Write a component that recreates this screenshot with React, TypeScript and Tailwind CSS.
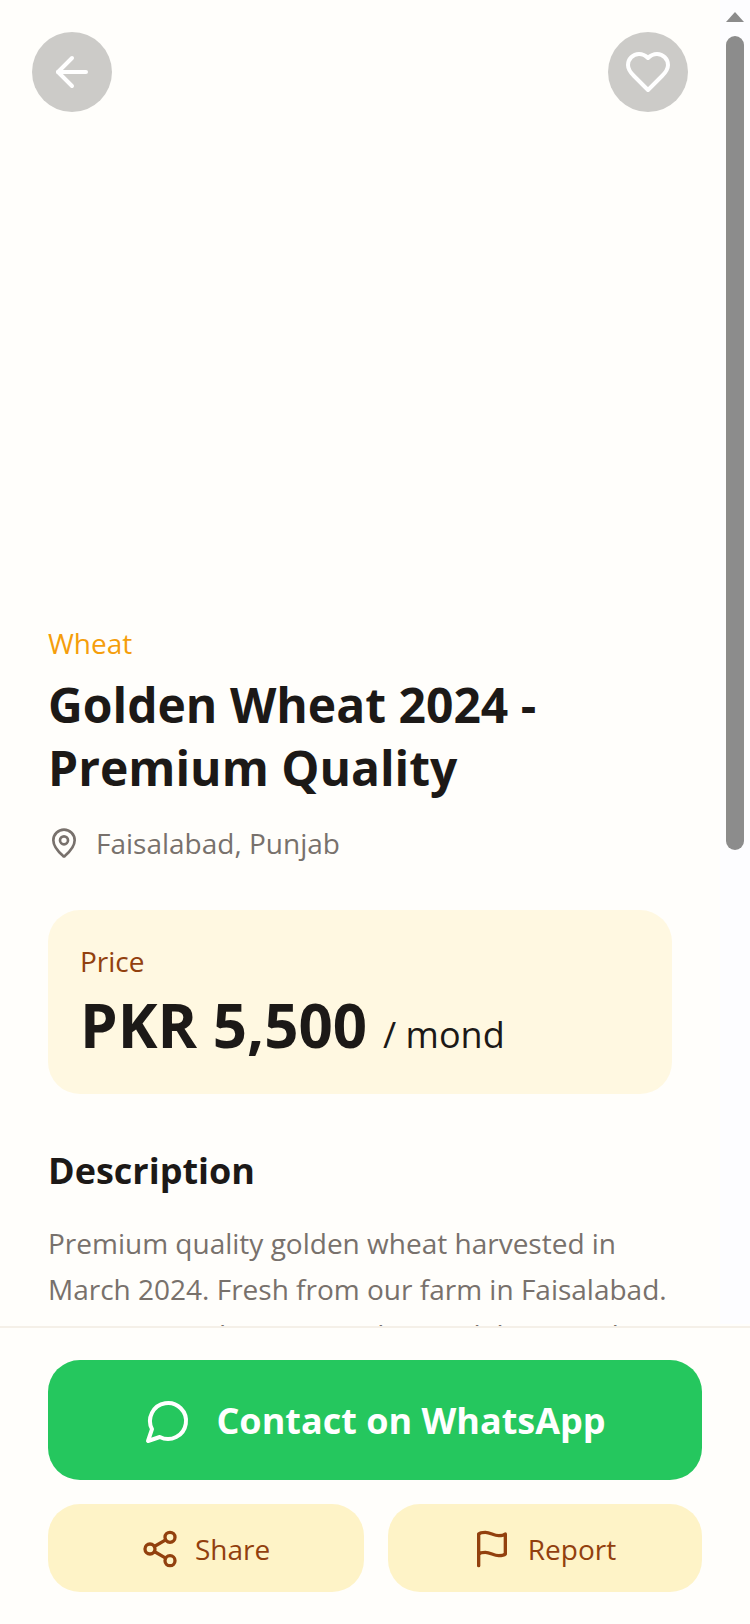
import React from 'react';
import {ArrowLeft, MapPin, Share2} from 'lucide-react';

const App: React.FC = () => {
    return (
        <div className="relative flex flex-col w-[750px] h-[1624px] overflow-hidden bg-[#fffefb] font-['Open_Sans',sans-serif]">
            <div className="flex-1 min-h-0 overflow-hidden">
                <div className="flex items-start justify-between h-[621px] p-8 pr-[62px]">
                    <button className="flex items-center justify-center w-20 h-20 rounded-full bg-black/20 text-white">
                        <ArrowLeft className="w-12 h-12" strokeWidth={2}/>
                    </button>
                    <button className="flex items-center justify-center w-20 h-20 rounded-full bg-black/20 text-white">
                        <svg viewBox="0 0 24 24" className="w-12 h-12" fill="none" stroke="currentColor" strokeWidth={2} strokeLinecap="round" strokeLinejoin="round">
                            <path d="M19 14c1.49-1.46 3-3.21 3-5.5A5.5 5.5 0 0 0 16.5 3c-1.76 0-3 .5-4.5 2-1.5-1.5-2.74-2-4.5-2A5.5 5.5 0 0 0 2 8.5c0 2.3 1.5 4.05 3 5.5l7 7Z"/>
                        </svg>
                    </button>
                </div>
                <div className="px-12 w-[720px]">
                    <p className="text-[28px] leading-[44px] text-[#f59e0b]">Wheat</p>
                    <h1 className="mt-2 text-[48px] leading-[63px] font-bold text-[#1c1917]">
                        Golden Wheat 2024 - Premium Quality
                    </h1>
                    <div className="flex items-center gap-4 mt-[22px] text-[28px] leading-[44px] text-[#78716c]">
                        <MapPin className="w-8 h-8" strokeWidth={2}/>
                        <span>Faisalabad, Punjab</span>
                    </div>
                    <div className="mt-[45px] w-[624px] h-[184px] px-8 pt-[29px] rounded-[32px] bg-[#fff8e1]">
                        <p className="text-[28px] leading-[44px] text-[#92400e]">Price</p>
                        <p className="flex items-baseline gap-4 mt-[2px] text-[#1c1917]">
                            <span className="text-[60px] leading-[80px] font-bold">PKR 5,500</span>
                            <span className="text-[36px]">/ mond</span>
                        </p>
                    </div>
                    <h2 className="mt-[49px] text-[36px] leading-[56px] font-bold text-[#1c1917]">Description</h2>
                    <p className="mt-[21px] w-[624px] text-[28px] leading-[46px] text-[#78716c]">
                        Premium quality golden wheat harvested in March 2024. Fresh from our farm in Faisalabad. Minimum order: 10 mond. Free delivery within Punjab.
                    </p>
                </div>
            </div>

            <div className="relative flex flex-col gap-6 h-[298px] px-12 pt-8 border-t-2 border-[#f5f0e8] bg-[#fffefb]">
                <button className="flex items-center justify-center gap-6 w-[654px] h-[120px] pt-[1px] rounded-[32px] bg-[#25c75e] text-white text-[36px] font-bold">
                    <svg viewBox="0 0 24 24" className="w-12 h-12" fill="none" stroke="currentColor" strokeWidth={2} strokeLinecap="round" strokeLinejoin="round">
                        <path d="M7.9 20A9 9 0 1 0 4 16.1L2 22Z"/>
                    </svg>
                    Contact on WhatsApp
                </button>
                <div className="flex gap-6 w-[654px]">
                    <button className="flex w-[316px] items-center justify-center gap-[15px] h-[88px] pt-[1px] pr-[2px] rounded-[32px] bg-[#fef3c7] text-[#92400e] text-[28px]">
                        <Share2 className="w-10 h-10" strokeWidth={2}/>
                        Share
                    </button>
                    <button className="flex flex-1 items-center justify-center gap-4 h-[88px] pt-[1px] pr-[2px] rounded-[32px] bg-[#fef3c7] text-[#92400e] text-[28px]">
                        <svg viewBox="0 0 24 24" className="w-10 h-10" fill="none" stroke="currentColor" strokeWidth={2} strokeLinecap="round" strokeLinejoin="round">
                            <path d="M4 15s1-1 4-1 5 2 8 2 4-1 4-1V3s-1 1-4 1-5-2-8-2-4 1-4 1z"/>
                            <path d="M4 22v-7"/>
                        </svg>
                        Report
                    </button>
                </div>
            </div>

            {/* scrollbar */}
            <div className="absolute top-0 right-0 w-[30px] h-[1324px] bg-[#fdfdff]">
                <div className="absolute left-[6px] top-[12px] w-0 h-0 border-x-[9px] border-x-transparent border-b-[10px] border-b-[#8c8c8c]"/>
                <div className="absolute left-[6px] top-[36px] w-[18px] h-[814px] rounded-full bg-[#8c8c8c]"/>
            </div>
        </div>
    );
};

export default App;
